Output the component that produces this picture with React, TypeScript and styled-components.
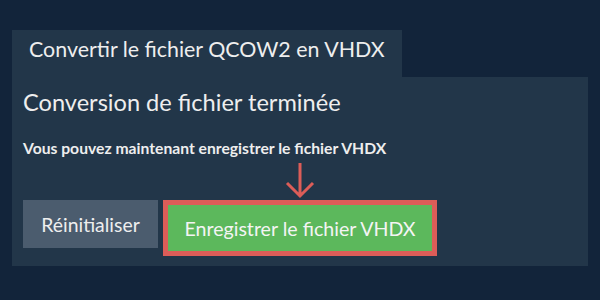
import React from "react";
import styled, { createGlobalStyle } from "styled-components";

const Global = createGlobalStyle`
  html, body { margin: 0; padding: 0; background: #12243a; }
  body { font-family: Lato, "Open Sans", sans-serif; color: #eeeeee; }
`;

const Page = styled.div`
  width: 600px;
  height: 300px;
  box-sizing: border-box;
  padding: 30px 12px 0 12px;
  display: flex;
  flex-direction: column;
  align-items: flex-start;
`;

const Tab = styled.div`
  height: 47px;
  width: 390px;
  box-sizing: border-box;
  padding: 6px 17px 0 17px;
  background: #223649;
  font-size: 21.4px;
  line-height: 26px;
  font-weight: 400;
  white-space: nowrap;
`;

const Panel = styled.div`
  width: 576px;
  height: 189px;
  box-sizing: border-box;
  background: #223649;
  padding: 10px 11px 10px 11px;
  display: flex;
  flex-direction: column;
`;

const Heading = styled.h2`
  margin: 0;
  font-size: 23.6px;
  font-weight: 400;
  line-height: 30px;
`;

const Note = styled.p`
  margin: 21px 0 0 0;
  font-size: 15.7px;
  font-weight: 700;
  line-height: 20px;
`;

const Actions = styled.div`
  margin-top: 42px;
  display: flex;
  align-items: flex-start;
  gap: 5px;
`;

const ResetButton = styled.button`
  width: 135px;
  height: 48px;
  padding: 0;
  border: none;
  background: #4b5c6e;
  color: #eeeeee;
  font-family: inherit;
  font-size: 19.4px;
  font-weight: 400;
`;

const Highlight = styled.div`
  position: relative;
  border: 5px solid #dc5d58;
`;

const SaveButton = styled.button`
  display: block;
  width: 264px;
  height: 46px;
  padding: 0;
  border: none;
  background: #5cb85c;
  color: #f4f4f4;
  font-family: inherit;
  font-size: 19.6px;
  font-weight: 400;
`;

const Arrow = styled.svg`
  position: absolute;
  left: 50%;
  bottom: calc(100% + 7px);
  transform: translateX(-50%);
  overflow: visible;
`;

export default function App() {
  return (
    <>
      <Global />
      <Page>
        <Tab>Convertir le fichier QCOW2 en VHDX</Tab>
        <Panel>
          <Heading>Conversion de fichier terminée</Heading>
          <Note>Vous pouvez maintenant enregistrer le fichier VHDX</Note>
          <Actions>
            <ResetButton>Réinitialiser</ResetButton>
            <Highlight>
              <Arrow width="28" height="35" viewBox="0 0 28 35">
                <path d="M14 0 V33 M1 20 L14 33 L27 20" fill="none" stroke="#dc5d58" strokeWidth="3" />
              </Arrow>
              <SaveButton>Enregistrer le fichier VHDX</SaveButton>
            </Highlight>
          </Actions>
        </Panel>
      </Page>
    </>
  );
}
